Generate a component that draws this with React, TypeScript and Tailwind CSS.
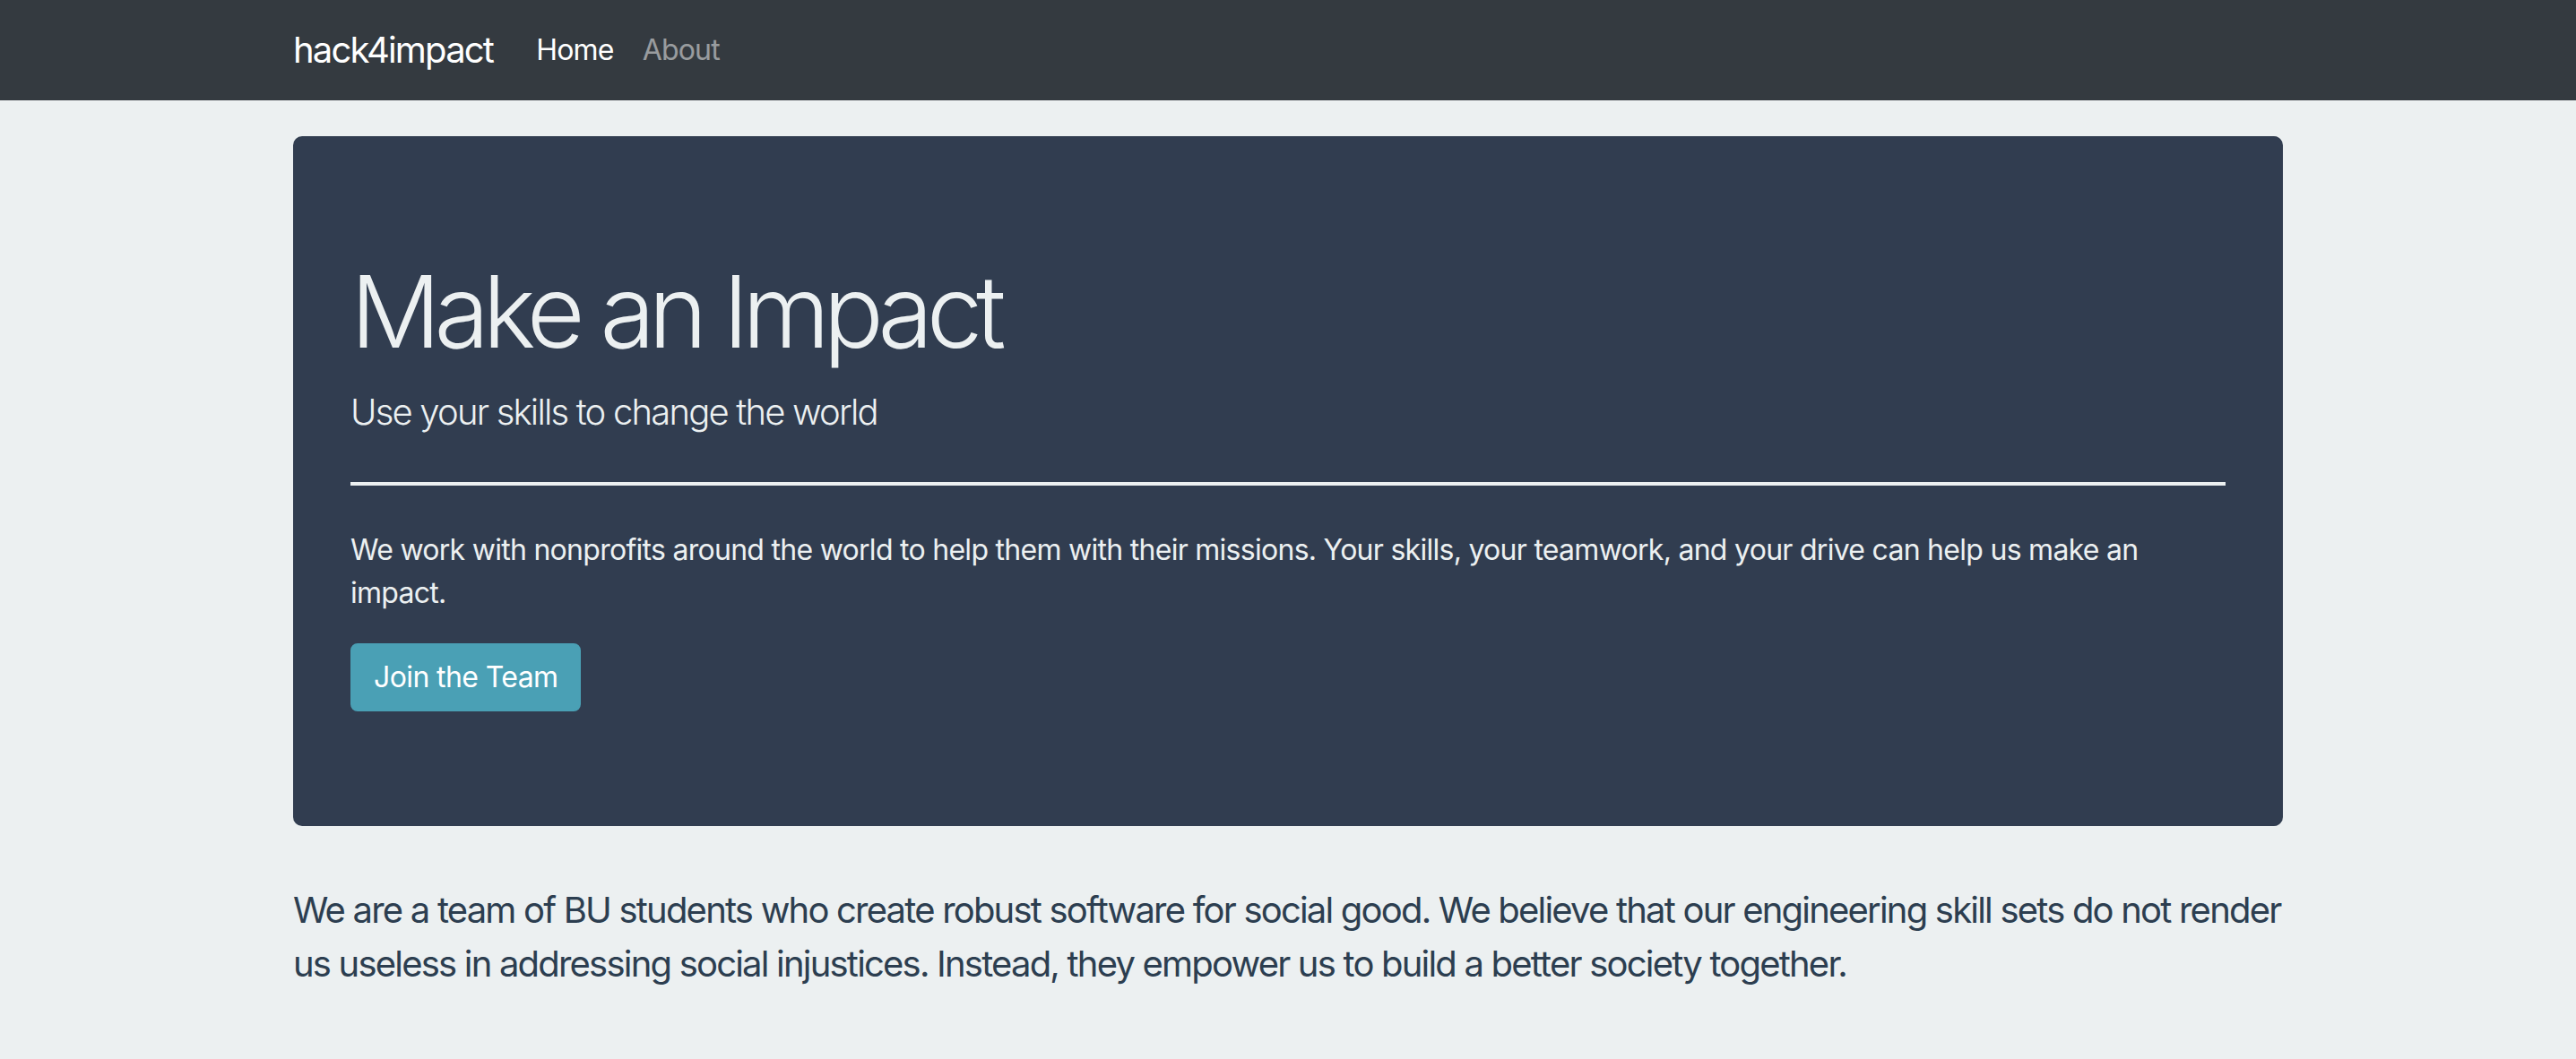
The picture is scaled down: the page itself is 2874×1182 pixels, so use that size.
export default function App() {
    return (
        <div className="min-h-screen bg-[#ecf0f1] font-['Inter','Noto_Sans',sans-serif]">
            <nav className="h-[112px] bg-[#343a40] flex items-center">
                <div className="w-[2280px] mx-auto px-[30px] flex items-center">
                    <a className="text-[40px] text-white mr-[32px] leading-[1.5] tracking-[-1.8px]" href="#">
                        hack4impact
                    </a>
                    <ul className="flex items-center">
                        <li>
                            <a className="text-[32px] text-white px-[16px] leading-[1.5] tracking-[-0.8px]" href="#">
                                Home
                            </a>
                        </li>
                        <li>
                            <a className="text-[32px] text-white/50 px-[16px] leading-[1.5] tracking-[-0.8px]" href="#">
                                About
                            </a>
                        </li>
                    </ul>
                </div>
            </nav>

            <main className="w-[2280px] mx-auto px-[30px] pt-[40px]">
                <div className="bg-[#313d50] rounded-[10px] px-[64px] py-[128px] mb-[64px] text-[#ecf0f1]">
                    <h1 className="text-[112px] font-light leading-[1.2] mb-[16px] tracking-[-7.4px]">Make an Impact</h1>
                    <p className="text-[40px] font-light leading-[1.5] tracking-[-1.8px]">
                        Use your skills to change the world
                    </p>
                    <hr className="my-[48px] border-0 h-[4px] bg-[#ecf0f1]" />
                    <p className="text-[32px] leading-[1.5] mb-[32px] tracking-[-0.72px]">
                        We work with nonprofits around the world to help them with their missions. Your skills, your
                        teamwork, and your drive can help us make an impact.
                    </p>
                    <a
                        className="inline-block bg-[#4aa0b5] border-2 border-[#4aa0b5] text-white text-[32px] leading-[1.5] px-[24px] py-[12px] rounded-[8px] tracking-[-0.6px]"
                        href="#"
                    >
                        Join the Team
                    </a>
                </div>
                <p className="text-[40px] leading-[1.5] text-[#2c3e50] tracking-[-1.8px]">
                    We are a team of BU students who create robust software for social good. We believe that our
                    engineering skill sets do not render us useless in addressing social injustices. Instead, they
                    empower us to build a better society together.
                </p>
            </main>
        </div>
    );
}
